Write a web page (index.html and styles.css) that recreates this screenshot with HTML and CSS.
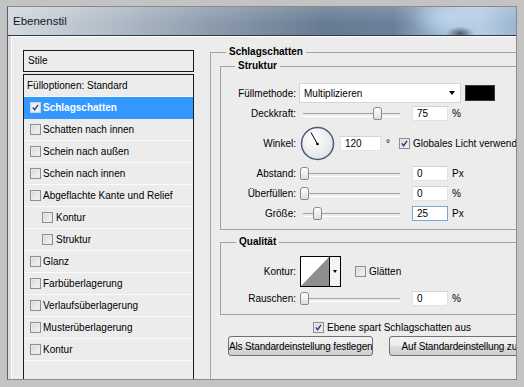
FILE: index.html
```html
<!DOCTYPE html>
<html lang="de">
<head>
  <meta charset="UTF-8" />
  <title>Ebenenstil</title>
  <link rel="stylesheet" href="styles.css">
</head>
<body>
  <div class="window">
    <div class="titlebar">Ebenenstil</div>
    <div class="dialog">

      <div class="styles-panel">
        <div class="panel-head">Stile</div>
        <ul class="style-list">
          <li class="plain">Fülloptionen: Standard</li>
          <li class="selected"><span class="cb"><svg viewBox="0 0 11 11"><path d="M2.2 5.4 L4.4 8.2 L8.6 2.2"/></svg></span>Schlagschatten</li>
          <li><span class="cb"></span>Schatten nach innen</li>
          <li><span class="cb"></span>Schein nach außen</li>
          <li><span class="cb"></span>Schein nach innen</li>
          <li><span class="cb"></span>Abgeflachte Kante und Relief</li>
          <li class="sub"><span class="cb"></span>Kontur</li>
          <li class="sub"><span class="cb"></span>Struktur</li>
          <li><span class="cb"></span>Glanz</li>
          <li><span class="cb"></span>Farbüberlagerung</li>
          <li><span class="cb"></span>Verlaufsüberlagerung</li>
          <li><span class="cb"></span>Musterüberlagerung</li>
          <li><span class="cb"></span>Kontur</li>
        </ul>
      </div>

      <fieldset class="group outer">
        <legend>Schlagschatten</legend>

        <fieldset class="group struktur">
          <legend>Struktur</legend>
          <div class="row">
            <label>Füllmethode:</label>
            <div class="select">Multiplizieren<span class="arrow"></span></div>
            <div class="swatch"></div>
          </div>
          <div class="row">
            <label>Deckkraft:</label>
            <div class="slider"><span class="thumb" style="left: 73px"></span></div>
            <div class="num">75</div>
            <span class="unit">%</span>
          </div>
          <div class="row row-dial">
            <label>Winkel:</label>
            <svg class="dial" viewBox="0 0 35 35">
              <defs>
                <radialGradient id="dialfill" cx="0.4" cy="0.35" r="0.7">
                  <stop offset="0" stop-color="#ffffff"/>
                  <stop offset="1" stop-color="#e2e2e2"/>
                </radialGradient>
              </defs>
              <circle cx="17.5" cy="17.5" r="16" fill="url(#dialfill)" stroke="#4b5a7e" stroke-width="1.5"/>
              <line x1="17.5" y1="18" x2="11" y2="6.5" stroke="#000" stroke-width="1"/>
              <circle cx="17.5" cy="18" r="1.3" fill="#000"/>
            </svg>
            <div class="num wide">120</div>
            <span class="deg">°</span>
            <span class="cb"><svg viewBox="0 0 11 11"><path d="M2.2 5.4 L4.4 8.2 L8.6 2.2"/></svg></span>
            <span class="cb-text">Globales Licht verwenden</span>
          </div>
          <div class="row spaced">
            <label>Abstand:</label>
            <div class="slider"><span class="thumb" style="left: 0px"></span></div>
            <div class="num">0</div>
            <span class="unit">Px</span>
          </div>
          <div class="row">
            <label>Überfüllen:</label>
            <div class="slider"><span class="thumb" style="left: 0px"></span></div>
            <div class="num">0</div>
            <span class="unit">%</span>
          </div>
          <div class="row">
            <label>Größe:</label>
            <div class="slider"><span class="thumb" style="left: 13px"></span></div>
            <div class="num focus">25</div>
            <span class="unit">Px</span>
          </div>
        </fieldset>

        <fieldset class="group qualitaet">
          <legend>Qualität</legend>
          <div class="row row-contour">
            <label>Kontur:</label>
            <div class="contour">
              <svg class="curve" viewBox="0 0 28 29"><polygon points="0,29 28,0 28,29" fill="#8e8e8e"/></svg>
              <span class="drop"><span class="arrow small"></span></span>
            </div>
            <span class="cb glatten"></span>
            <span class="cb-text">Glätten</span>
          </div>
          <div class="row spaced-sm">
            <label>Rauschen:</label>
            <div class="slider"><span class="thumb" style="left: 0px"></span></div>
            <div class="num">0</div>
            <span class="unit">%</span>
          </div>
        </fieldset>

        <div class="knockout">
          <span class="cb"><svg viewBox="0 0 11 11"><path d="M2.2 5.4 L4.4 8.2 L8.6 2.2"/></svg></span>
          <span class="cb-text">Ebene spart Schlagschatten aus</span>
        </div>

        <div class="buttons">
          <button class="btn first">Als Standardeinstellung festlegen</button>
          <button class="btn second">Auf Standardeinstellung zurücksetzen</button>
        </div>
      </fieldset>

    </div>
  </div>
</body>
</html>
```

FILE: styles.css
```css
* { box-sizing: border-box; }
body { margin: 0; width: 524px; height: 387px; overflow: hidden; background: #c3c3c3;
  font-family: "Liberation Sans", Arial, sans-serif; font-size: 10px; color: #000; }

.window { margin: 6px 7px 7px 7px; height: 374px; border: 1px solid #8a8a8a; border-left-color: #55616e; }
.titlebar { height: 29px; padding-left: 5px; line-height: 28px; font-size: 11.5px; color: #161a1f;
  border-bottom: 1px solid #2f3945;
  background:
    radial-gradient(ellipse 14px 7px at 89% 95%, rgba(40,50,60,0.7), rgba(40,50,60,0)),
    radial-gradient(ellipse 40px 18px at 87% 40%, rgba(200,220,240,0.7), rgba(200,220,240,0)),
    linear-gradient(180deg, rgba(255,255,255,0.15), rgba(255,255,255,0) 60%),
    linear-gradient(90deg, #d3d9df 0, #b6c0cb 18%, #8d9cad 40%, #677b92 62%, #6a809a 76%, #9fbad6 85%, #b6cde4 93%, #9cb6d1 100%); }

.dialog { height: 343px; display: flex; align-items: flex-start; padding: 10px 0 0 12px; overflow: hidden;
  background: #ececec; border-left: 3px solid #dcdcdc; box-shadow: inset 1px 1px 0 #fff; }

/* left list of styles */
.styles-panel { width: 171px; flex: none; margin-top: 4px; }
.panel-head { height: 22px; border: 1px solid #1a1a1a; padding-left: 4px; line-height: 20px; }
.style-list { list-style: none; margin: 2px 0 0; padding: 0; height: 320px; border: 1px solid #1a1a1a; border-bottom: 0; }
.style-list li { height: 22px; display: flex; align-items: center; gap: 2px; padding-left: 6px;
  border-bottom: 1px solid #fbfbfb; white-space: nowrap; }
.style-list li.plain { padding-left: 3px; }
.style-list li.sub { padding-left: 18px; gap: 3px; }
.style-list li.selected { background: #3399ff; border-bottom-color: #3399ff; color: #fff; font-weight: bold; }

/* checkboxes */
.cb { width: 11px; height: 11px; flex: none; display: inline-block; border: 1px solid #8e8f8f;
  background: linear-gradient(135deg, #d6d6d6, #f7f7f7); box-shadow: inset 0 0 0 1px #e9e9e9; }
.cb svg { display: block; width: 9px; height: 9px; }
.cb path { fill: none; stroke: #2b3f8c; stroke-width: 1.8; }
.selected .cb { background: #f4f4f4; border-color: #c9d6e6; }
.cb-text { margin-left: 3px; white-space: nowrap; }

/* group boxes */
.group { margin: 0; border: 1px solid #a2a2a2; min-width: 0; }
.group legend { padding: 0 3px; font-weight: bold; line-height: 12px; }
.outer { margin-left: 16px; width: 330px; padding: 2px 0 60px 9px; border-right: 0; border-bottom: 0; }
.outer > legend { margin-left: 6px; }
.struktur { width: 320px; padding: 11px 0 6px 0; }
.struktur > legend { margin-left: 14px; }
.qualitaet { width: 320px; margin-top: 6px; padding: 8px 0 6px 0; }
.qualitaet > legend { margin-left: 15px; }

/* rows */
.row { display: flex; align-items: center; height: 20px; white-space: nowrap; }
.row label { width: 75px; flex: none; text-align: right; }
.row-dial { height: 34px; margin-top: 3px; }
.row.spaced { margin-top: 3px; }
.row-contour { height: 30px; }
.row.spaced-sm { margin-top: 2px; }

.select { width: 162px; height: 20px; margin-left: 3px; display: flex; align-items: center; justify-content: space-between;
  padding: 0 5px 0 4px; background: #fff; border: 1px solid #d4d4d4; }
.arrow { width: 0; height: 0; border-left: 3.5px solid transparent; border-right: 3.5px solid transparent; border-top: 4px solid #000; }
.arrow.small { border-left-width: 2.5px; border-right-width: 2.5px; border-top-width: 3px; }
.swatch { width: 30px; height: 16px; margin-left: 4px; background: #000; border: 1px solid #3a3a3a; }

.slider { position: relative; width: 102px; height: 20px; margin-left: 4px; }
.slider::before { content: ""; position: absolute; left: 3px; right: 2px; top: 10px; height: 2px;
  border-top: 1px solid #a3a3a3; border-bottom: 1px solid #fff; }
.thumb { position: absolute; top: 4px; width: 9px; height: 13px; border: 1px solid #8a8a8a; border-radius: 3px 3px 2px 2px;
  background: linear-gradient(180deg, #ffffff, #dedede); }

.num { width: 36px; height: 15px; margin-left: 10px; padding-left: 4px; line-height: 13px; background: #fff;
  border: 1px solid #e2e2e2; border-top-color: #d2d2d2; }
.num.wide { width: 41px; margin-left: 5px; }
.num.focus { border-color: #7aa5d6; }
.unit { margin-left: 4px; }
.deg { margin-left: 5px; }
.row-dial .cb { margin-left: 9px; }

.dial { width: 35px; height: 35px; margin-left: 4px; flex: none; }

.contour { width: 41px; height: 31px; margin-left: 4px; display: flex; border: 1px solid #000; background: #fff; }
.curve { width: 28px; height: 29px; display: block; }
.drop { flex: 1; display: flex; align-items: center; justify-content: center; border-left: 1px solid #000; background: #f4f4f4; }
.cb.glatten { margin-left: 14px; }

.knockout { display: flex; align-items: center; height: 15px; margin-top: 5px; padding-left: 93px; }
.buttons { display: flex; margin-top: 1px; padding-left: 8px; white-space: nowrap; }
.btn { height: 20px; padding: 0; font-family: inherit; font-size: 10px; letter-spacing: -0.15px; color: #000;
  border: 1px solid #707070; border-radius: 3px;
  background: linear-gradient(180deg, #f4f4f4 0, #ebebeb 50%, #dddddd 51%, #cfcfcf 100%); }
.btn.first { width: 158px; }
.btn.second { width: 170px; margin-left: 16px; flex: none; text-align: left; padding-left: 11px; }
```
